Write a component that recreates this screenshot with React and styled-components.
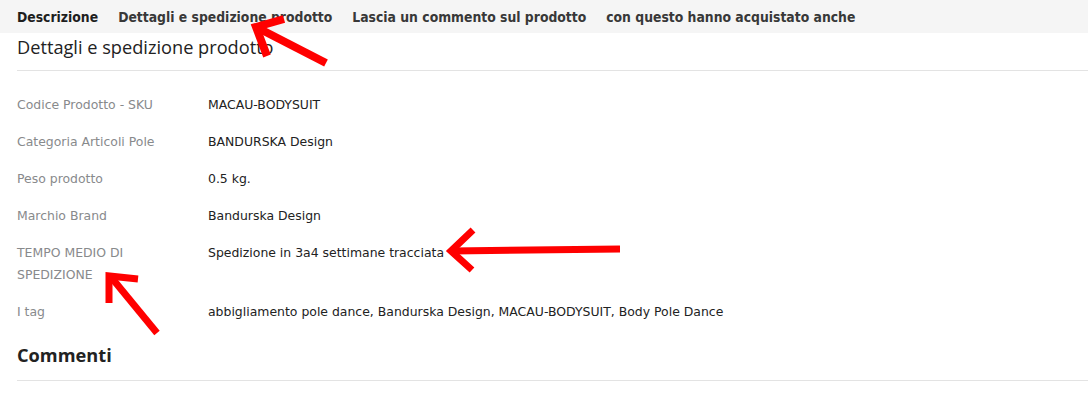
import React from "react";
import styled, { createGlobalStyle } from "styled-components";

const GlobalStyle = createGlobalStyle`
  html, body {
    margin: 0;
    padding: 0;
    background: #fff;
  }
  body {
    font-family: "DejaVu Sans", "Liberation Sans", sans-serif;
  }
`;

const details = [
  { label: "Codice Prodotto - SKU", value: "MACAU-BODYSUIT" },
  { label: "Categoria Articoli Pole", value: "BANDURSKA Design" },
  { label: "Peso prodotto", value: "0.5 kg." },
  { label: "Marchio Brand", value: "Bandurska Design" },
  { label: "TEMPO MEDIO DI SPEDIZIONE", value: "Spedizione in 3a4 settimane tracciata" },
  {
    label: "I tag",
    value: "abbigliamento pole dance, Bandurska Design, MACAU-BODYSUIT, Body Pole Dance",
  },
];

const tabs = [
  "Descrizione",
  "Dettagli e spedizione prodotto",
  "Lascia un commento sul prodotto",
  "con questo hanno acquistato anche",
];

const App = () => {
  return (
    <>
      <GlobalStyle />
      <Page>
        <TabBar>
          {tabs.map((t, i) => (
            <Tab key={t} active={i === 0}>
              {t}
            </Tab>
          ))}
        </TabBar>
        <Content>
          <Heading>Dettagli e spedizione prodotto</Heading>
          <DetailsTable>
            {details.map((d) => (
              <React.Fragment key={d.label}>
                <Label>{d.label}</Label>
                <Value>{d.value}</Value>
              </React.Fragment>
            ))}
          </DetailsTable>
          <Heading bold>Commenti</Heading>
        </Content>
        <Annotations width="1088" height="406" viewBox="0 0 1088 406">
          <g stroke="#ff0000" strokeWidth="8" fill="none" strokeLinecap="butt" strokeLinejoin="miter">
            <path d="M326 63 L256 27" />
            <path d="M284 19 L256 27 L267 56" />
          </g>
          <g stroke="#ff0000" strokeWidth="7" fill="none" strokeLinecap="butt" strokeLinejoin="miter">
            <path d="M620 249 L452 251" />
            <path d="M473 230 L451 251 L472 270" />
          </g>
          <g stroke="#ff0000" strokeWidth="7" fill="none" strokeLinecap="butt" strokeLinejoin="miter">
            <path d="M157 333 L111 277" />
            <path d="M138 279 L109 276 L109 303" />
          </g>
        </Annotations>
      </Page>
    </>
  );
};

const Page = styled.div`
  position: relative;
  width: 1088px;
  height: 406px;
  overflow: hidden;
`;

const TabBar = styled.div`
  display: flex;
  align-items: center;
  gap: 20px;
  height: 33px;
  padding: 0 17px;
  background-color: #f5f5f5;
`;

const Tab = styled.div`
  font-family: "DejaVu Sans Condensed", "DejaVu Sans", sans-serif;
  font-stretch: condensed;
  font-size: 13.8px;
  font-weight: bold;
  color: ${({ active }) => (active ? "#1e1e1e" : "#383838")};
  cursor: pointer;
`;

const Content = styled.div`
  padding-left: 17px;
`;

const Heading = styled.h2`
  margin: ${({ bold }) => (bold ? "12px 0 0" : "1px 0 0")};
  padding-bottom: ${({ bold }) => (bold ? "12px" : "10px")};
  border-bottom: 1px solid #e3e3e3;
  font-family: "Open Sans", "Noto Sans", sans-serif;
  font-size: 18.2px;
  line-height: 26px;
  font-weight: ${({ bold }) => (bold ? 700 : 500)};
  color: #222;
`;

const DetailsTable = styled.div`
  display: grid;
  grid-template-columns: 191px 1fr;
  margin-top: 15px;
  font-size: 12.45px;
  line-height: 22px;
`;

const Label = styled.div`
  padding: 7.5px 30px 7.5px 0;
  color: #888a8c;
`;

const Value = styled.div`
  padding: 7.5px 0;
  color: #222;
`;

const Annotations = styled.svg`
  position: absolute;
  top: 0;
  left: 0;
  pointer-events: none;
`;

export default App;
